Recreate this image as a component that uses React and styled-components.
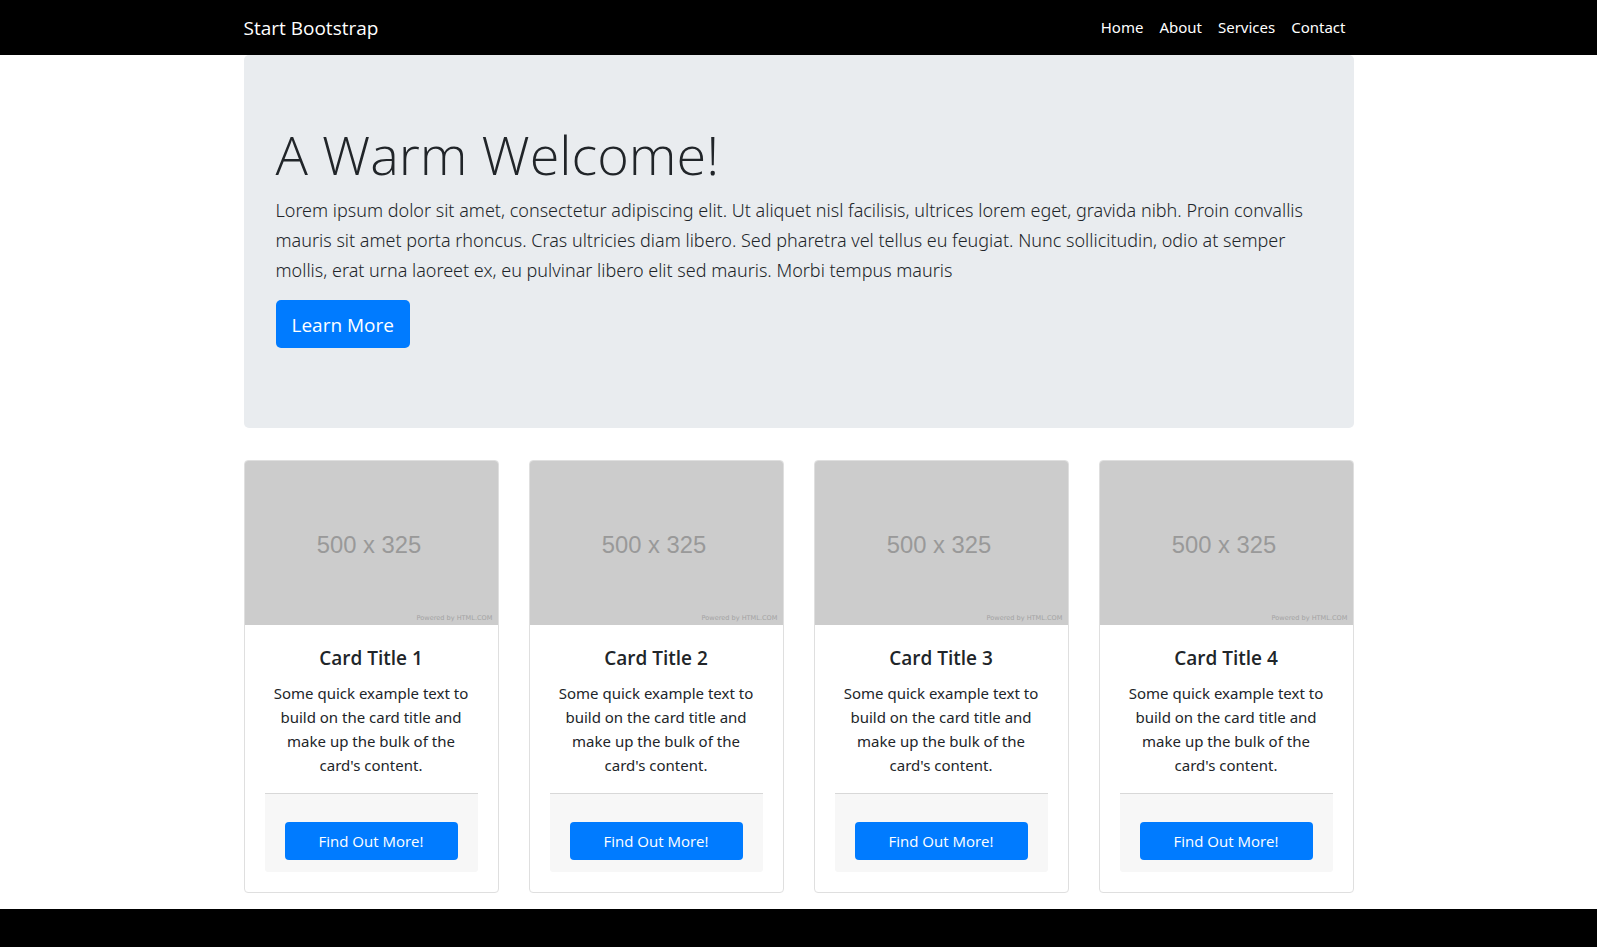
import React from "react";
import styled, { createGlobalStyle } from "styled-components";

const GlobalStyle = createGlobalStyle`
  *, *::before, *::after { box-sizing: border-box; }
  body {
    margin: 0;
    background: #fff;
    color: #212529;
    font-family: "Noto Sans", "Open Sans", sans-serif;
    font-size: 15px;
    line-height: 24px;
  }
  h1, h2, p, ul { margin: 0; padding: 0; }
`;

const Page = styled.div`
  display: flex;
  flex-direction: column;
  min-height: 100vh;
`;

const Container = styled.div`
  width: 100%;
  max-width: 1140px;
  margin: 0 auto;
  padding: 0 15px;
`;

const Navbar = styled.header`
  background: #000;
  padding: 8px 0;
`;

const NavInner = styled(Container)`
  display: flex;
  flex-wrap: wrap;
  align-items: center;
  justify-content: space-between;
`;

const Brand = styled.a`
  color: #fff;
  font-family: "Open Sans", sans-serif;
  font-size: 19px;
  line-height: 31px;
  padding: 5px 0 3px;
  text-decoration: none;
`;

const NavList = styled.ul`
  display: flex;
  list-style: none;
`;

const NavLink = styled.a`
  display: block;
  padding: 6px 8px 8px;
  color: #fff;
  text-decoration: none;
`;

const Jumbotron = styled.section`
  margin-bottom: 32px;
  padding: 66px 32px 80px;
  border-radius: 5px;
  background: #e9ecef;
`;

const Headline = styled.h1`
  margin-bottom: 7px;
  font-family: "Open Sans", sans-serif;
  font-size: 54px;
  font-weight: 300;
  line-height: 67px;
`;

const Lead = styled.p`
  margin-bottom: 15px;
  font-size: 18px;
  font-weight: 300;
  line-height: 30px;
`;

const Button = styled.a`
  display: inline-block;
  padding: ${(p) => (p.$large ? "10px 16px 8px" : "7px 13px")};
  border-radius: ${(p) => (p.$large ? "5px" : "4px")};
  background: #007bff;
  color: #fff;
  font-family: "Open Sans", sans-serif;
  font-size: ${(p) => (p.$large ? "19px" : "15px")};
  line-height: ${(p) => (p.$large ? "30px" : "24px")};
  text-align: center;
  text-decoration: none;
  vertical-align: top;
`;

const CardGrid = styled.main`
  display: grid;
  grid-template-columns: repeat(4, minmax(0, 1fr));
  gap: 30px;
  margin-bottom: 16px;
  @media (max-width: 991px) {
    grid-template-columns: repeat(2, minmax(0, 1fr));
  }
`;

const Card = styled.article`
  display: flex;
  flex-direction: column;
  overflow: hidden;
  border: 1px solid #dfdfdf;
  border-radius: 4px;
  text-align: center;
`;

const Placeholder = styled.svg`
  display: block;
  width: 100%;
  background: #ccc;
`;

const SizeText = styled.text`
  fill: #999;
  font-family: "Liberation Sans Narrow", "Arial Narrow", "Liberation Sans", sans-serif;
  font-size: 47px;
`;

const CreditText = styled.text`
  fill: #a3a3a3;
  font-family: "DejaVu Sans", sans-serif;
  font-size: 13px;
`;

const CardBody = styled.div`
  flex: 1;
  padding: 20px;
`;

const CardTitle = styled.h2`
  margin-bottom: 11px;
  padding-top: 1px;
  font-family: "Open Sans", sans-serif;
  font-size: 19px;
  font-weight: 600;
  line-height: 24px;
`;

const CardText = styled.p`
  margin-bottom: 16px;
  padding: 0 4px;
`;

const CardFooter = styled.div`
  display: grid;
  padding: 28px 20px 12px;
  border-top: 1px solid #d8d8d8;
  border-radius: 0 0 3px 3px;
  background: #f7f7f7;
`;

const PageFooter = styled.footer`
  flex: 1 0 38px;
  background: #000;
`;

const links = ["Home", "About", "Services", "Contact"];
const cards = [1, 2, 3, 4];

export default function App() {
  return (
    <Page>
      <GlobalStyle />
      <Navbar>
        <NavInner>
          <Brand href="#">Start Bootstrap</Brand>
          <nav>
            <NavList>
              {links.map((name) => (
                <li key={name}>
                  <NavLink href="#">{name}</NavLink>
                </li>
              ))}
            </NavList>
          </nav>
        </NavInner>
      </Navbar>
      <Container>
        <Jumbotron>
          <Headline>A Warm Welcome!</Headline>
          <Lead>
            Lorem ipsum dolor sit amet, consectetur adipiscing elit. Ut aliquet nisl facilisis,
            ultrices lorem eget, gravida nibh. Proin convallis mauris sit amet porta rhoncus. Cras
            ultricies diam libero. Sed pharetra vel tellus eu feugiat. Nunc sollicitudin, odio at
            semper mollis, erat urna laoreet ex, eu pulvinar libero elit sed mauris. Morbi tempus
            mauris
          </Lead>
          <Button href="#" $large>
            Learn More
          </Button>
        </Jumbotron>
        <CardGrid>
          {cards.map((n) => (
            <Card key={n}>
              <Placeholder viewBox="0 0 500 325">
                <SizeText x="245" y="182" textAnchor="middle">
                  500 x 325
                </SizeText>
                <CreditText x="489" y="314" textAnchor="end">
                  Powered by HTML.COM
                </CreditText>
              </Placeholder>
              <CardBody>
                <CardTitle>Card Title {n}</CardTitle>
                <CardText>
                  Some quick example text to build on the card title and make up the bulk of the
                  card's content.
                </CardText>
                <CardFooter>
                  <Button href="#">Find Out More!</Button>
                </CardFooter>
              </CardBody>
            </Card>
          ))}
        </CardGrid>
      </Container>
      <PageFooter />
    </Page>
  );
}
